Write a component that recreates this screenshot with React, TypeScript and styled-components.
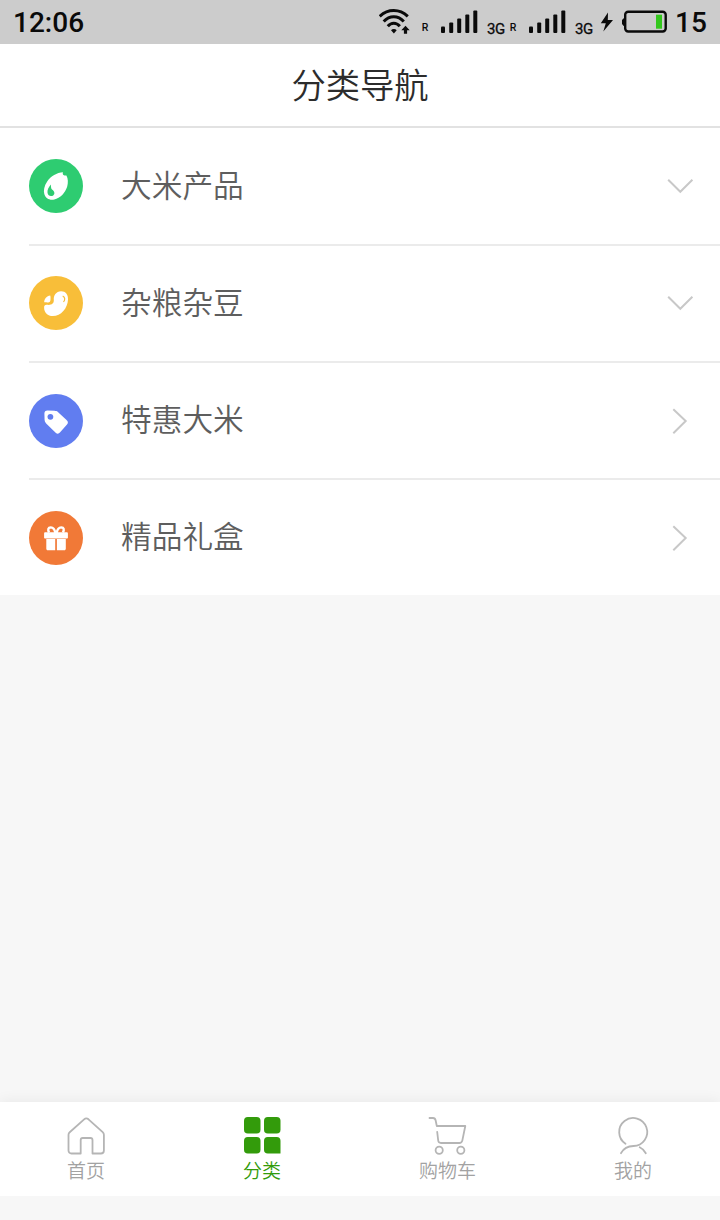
import React from "react";
import styled, { createGlobalStyle } from "styled-components";

const GlobalStyle = createGlobalStyle`
  * { box-sizing: border-box; }
  body { margin: 0; background: #f7f7f7; font-family: "Noto Sans CJK SC", sans-serif; }
`;

const Screen = styled.div`
  display: flex;
  flex-direction: column;
  width: 720px;
  height: 1220px;
  overflow: hidden;
  background: #f7f7f7;
`;

const StatusBar = styled.header`
  display: flex;
  align-items: center;
  justify-content: space-between;
  flex: none;
  height: 44px;
  padding: 1px 13px 0;
  background: #cccccc;
  color: #0a0a0a;
  font: 500 28px/43px Roboto, sans-serif;
`;

const StatusIcons = styled.div`
  display: flex;
  align-items: center;
  height: 43px;
  svg { flex: none; margin-bottom: 2px; }
`;

const Level = styled.span`
  width: 32px;
  margin-left: 8px;
`;

const Roaming = styled.span<{ $gap: number }>`
  width: 10px;
  margin: 11px 11px 0 ${(p) => p.$gap}px;
  font: 500 10.5px/16px Roboto, sans-serif;
  text-align: center;
`;

const Network = styled.span`
  width: 19px;
  margin: 12px 0 0 9px;
  font: 400 15px/16px Roboto, sans-serif;
  letter-spacing: -0.5px;
  -webkit-text-stroke: 0.3px #0a0a0a;
`;

const TitleBar = styled.h1`
  flex: none;
  height: 84px;
  margin: 0;
  border-bottom: 2px solid #e2e2e2;
  background: #fff;
  color: #2c2c2c;
  text-align: center;
  font-size: 34.3px;
  font-weight: 350;
  line-height: 79px;
`;

const CategoryList = styled.ul`
  flex: none;
  margin: 0;
  padding: 0 0 0 29px;
  background: #fff;
  list-style: none;
`;

const CategoryRow = styled.li`
  display: flex;
  align-items: center;
  height: 117px;
  padding-right: 26px;
  border-bottom: 2px solid #ebebeb;
  &:first-child { height: 118px; }
  &:nth-child(2) { padding-bottom: 1px; }
  &:last-child { height: 115px; border-bottom: 0; }
`;

const Badge = styled.span<{ $color: string }>`
  display: flex;
  width: 54px;
  height: 54px;
  border-radius: 50%;
  background: ${(p) => p.$color};
`;

const CategoryName = styled.span`
  flex: 1;
  margin-left: 38px;
  padding-bottom: 5px;
  color: #5e5e5e;
  font-size: 30.7px;
  font-weight: 350;
  line-height: 46px;
`;

const TabBar = styled.nav`
  display: flex;
  justify-content: space-between;
  flex: none;
  height: 94px;
  margin-top: auto;
  margin-bottom: 24px;
  padding: 13px 68px 0 67px;
  background: #fff;
  box-shadow: 0 0 14px rgba(0, 0, 0, 0.07);
  clip-path: inset(-14px 0 0 0);
`;

const Tab = styled.a<{ $active?: boolean }>`
  display: flex;
  flex-direction: column;
  align-items: center;
  color: ${(p) => (p.$active ? "#339b0b" : "#a2a2a2")};
  font-size: 19px;
  font-weight: 350;
  line-height: 26px;
`;

const TabIcon = styled.svg`
  display: block;
  width: 40px;
  height: 42px;
  margin: 0 -1px;
  fill: none;
  stroke: #b5b5b5;
  stroke-width: 1.8;
  stroke-linecap: round;
  stroke-linejoin: round;
`;

const Signal = () => (
  <svg width="37" height="24" viewBox="0 0 37 24" fill="#0a0a0a">
    <rect x="0" y="16.5" width="4" height="6.5" rx="1" />
    <rect x="8.2" y="12.5" width="4" height="10.5" rx="1" />
    <rect x="16.2" y="8.5" width="4" height="14.5" rx="1" />
    <rect x="24.3" y="4.5" width="4" height="18.5" rx="1" />
    <rect x="32.3" y="0.5" width="4" height="22.5" rx="1" />
  </svg>
);

const Wifi = () => (
  <svg width="32" height="28" viewBox="0 0 32 28" fill="none" stroke="#0a0a0a" strokeWidth="3">
    <path d="M.7 8.300C9 .5 20.500 .5 28.800 8.300M4.700 13.500C10.500 7.200 19 7.200 24.800 13.500M8.800 18.300c3.500-4 8.500-4 12 0" />
    <path d="M12 22.200c1.500-1.500 4.200-1.500 5.700 0l-2.800 3.300z" fill="#0a0a0a" stroke="none" />
    <path d="M26.500 17.700l4.200 4.600h-2.600v3.500h-3.200v-3.500h-2.600z" fill="#0a0a0a" stroke="none" />
  </svg>
);

const ChargingBolt = styled.svg`
  margin: 0 7px 0 6px;
`;

const Battery = () => (
  <svg width="46" height="24" viewBox="0 0 46 24">
    <path d="M4 8.300H2.700L1 10v4l1.700 2H4z" fill="#0a0a0a" />
    <rect x="4.200" y="1.800" width="40.500" height="19.700" rx="3" fill="none" stroke="#0a0a0a" strokeWidth="2.400" />
    <rect x="35" y="4.700" width="6" height="14" fill="#33c71c" />
  </svg>
);

const glyphs: Record<string, React.ReactNode> = {
  rice: (
    <>
      <path fill="#fff" d="M34 13.200c-6 .4-12.300 4-15.800 9.200-3 4.500-3.900 9-2.900 12.600 1.300 4.300 5.300 6.600 10 5.500 6-1.400 11-6.500 12.900-13 1-3.600 1-8-.8-11-1.400.1-2.300-.1-2.900-.5-.8-.6-.9-1.700-.5-2.800z" />
      <path fill="#2ecc71" d="M22 25.600c-2.400 2.500-3.900 5.700-3.500 8.200.4 2.500 2.500 3.700 4.500 3.100 2.400-.7 3.100-3.200 1.600-5-.7-.9-1.800-1.200-2.300-2.300-.4-1.200-.4-2.400-.3-4z" />
    </>
  ),
  bean: (
    <>
      <path fill="#fff" d="M32 15.300c4.500-.1 7.200 3.200 7 8.200C38.600 32.400 32 40 23.800 40c-5 0-8.700-3.500-8.700-8.300 0-2.400 1-3.200 3.200-2.900 4.100.5 6.800-1.300 6.500-4.800-.4-4.600 2.300-8.500 7.200-8.700z" />
      <path fill="#fff" d="M15.200 26.300c.1-3.500 2.500-6.200 6-6.700.5 1.300.3 2.600.3 4 0 2.300-1.200 3.300-3.200 2.900-1.200-.3-2-.3-3.100-.2z" />
      <path fill="none" stroke="#f8be39" strokeWidth="1.200" d="M33.700 20c2.500 1.200 2.600 3.700.8 6" />
    </>
  ),
  tag: (
    <>
      <path fill="#fff" stroke="#fff" strokeWidth="2.400" strokeLinejoin="round" d="M18.500 17.700l7.300.2c1 0 1.700.4 2.500 1.100l8.700 8.200c.9.800.9 1.600.1 2.500l-7.100 8.100c-.8.900-1.600.9-2.500.1l-9.500-9.200c-.8-.8-1.200-1.500-1.200-2.600l-.2-6.600c0-1.100.8-1.800 1.900-1.800z" />
      <circle cx="21.400" cy="22.800" r="2.900" fill="#617df0" />
    </>
  ),
  gift: (
    <>
      <path fill="none" stroke="#fff" strokeWidth="2.400" d="M26.300 22c-.5-3.300-2.300-5.500-4.600-5.600-2.500 0-3.200 2.400-1.600 5M27.700 22c.5-3.300 2.300-5.500 4.600-5.600 2.500 0 3.200 2.400 1.600 5" />
      <path fill="#fff" d="M16.300 21.200h21.400c.7 0 1.200.5 1.200 1.200v4c0 .7-.5 1.200-1.200 1.200H16.300c-.7 0-1.200-.5-1.200-1.200v-4c0-.7.5-1.200 1.200-1.200zM17.300 28.100h8.900v11.200h-7.400c-.9 0-1.500-.6-1.500-1.500zM27.900 28.100h8.900v9.700c0 .9-.6 1.500-1.500 1.500h-7.400z" />
    </>
  ),
};

const Chevron = ({ down }: { down?: boolean }) => (
  <svg width="28" height="28" viewBox="0 0 28 28" fill="none" stroke="#c8c8c8" strokeWidth="2">
    <path d={down ? "M2.200 7.800L14.300 19.800 26.400 7.800" : "M7.300 2.200L19.700 14 7.300 26.200"} />
  </svg>
);

const categories = [
  { name: "大米产品", color: "#2ecc71", glyph: "rice", expandable: true },
  { name: "杂粮杂豆", color: "#f8be39", glyph: "bean", expandable: true },
  { name: "特惠大米", color: "#617df0", glyph: "tag", expandable: false },
  { name: "精品礼盒", color: "#f17937", glyph: "gift", expandable: false },
];

export default function App() {
  return (
    <>
      <GlobalStyle />
      <Screen>
        <StatusBar>
          <span>12:06</span>
          <StatusIcons>
            <Wifi />
            <Roaming $gap={9}>R</Roaming>
            <Signal />
            <Network>3G</Network>
            <Roaming $gap={2}>R</Roaming>
            <Signal />
            <Network>3G</Network>
            <ChargingBolt width="14" height="22" viewBox="0 0 14 22" fill="#0a0a0a">
              <path d="M8 1.500L.8 12.200h5L3.300 20.500 13 9H7.800z" />
            </ChargingBolt>
            <Battery />
            <Level>15</Level>
          </StatusIcons>
        </StatusBar>
        <TitleBar>分类导航</TitleBar>
        <CategoryList>
          {categories.map((c) => (
            <CategoryRow key={c.name}>
              <Badge $color={c.color}>
                <svg width="54" height="54" viewBox="0 0 54 54">{glyphs[c.glyph]}</svg>
              </Badge>
              <CategoryName>{c.name}</CategoryName>
              <Chevron down={c.expandable} />
            </CategoryRow>
          ))}
        </CategoryList>
        <TabBar>
          <Tab>
            <TabIcon viewBox="0 0 40 42">
              <path d="M14.700 38.500H5.500c-1.800 0-3-1.200-3-3V19.800c0-1.100.4-1.900 1.200-2.600L18.100 4.300c1.500-1.300 2.900-1.300 4.400 0l14.200 12.900c.8.7 1.200 1.500 1.200 2.600v15.700c0 1.800-1.200 3-3 3h-8.400V25c0-1.300-.7-2-2-2H16.700c-1.300 0-2 .7-2 2z" />
            </TabIcon>
            首页
          </Tab>
          <Tab $active>
            <TabIcon viewBox="0 0 40 42">
              <g fill="#339b0b" stroke="none">
                <rect x="2" y="2" width="16.500" height="16.500" rx="3.800" />
                <rect x="22" y="2" width="16.500" height="16.500" rx="3.800" />
                <rect x="2" y="22" width="16.500" height="16.500" rx="3.800" />
                <path d="M25.800 22h8.900a3.800 3.800 0 0 1 3.800 3.800v12.700H25.800a3.800 3.800 0 0 1-3.800-3.800v-8.900a3.800 3.800 0 0 1 3.800-3.800z" />
              </g>
            </TabIcon>
            分类
          </Tab>
          <Tab>
            <TabIcon viewBox="0 0 40 42">
              <path d="M2.500 3H6c1.500 0 2.300.8 2.600 2.300L9.800 11h28.500l-3 14.600c-.4 1.700-1.300 2.400-3 2.400H14c-1.700 0-2.600-.8-2.800-2.500L10.200 17" />
              <circle cx="12.200" cy="35.300" r="3.600" />
              <circle cx="33.800" cy="35.300" r="3.600" />
            </TabIcon>
            购物车
          </Tab>
          <Tab>
            <TabIcon viewBox="0 0 40 42">
              <path d="M12.500 28.700A14 14 0 1 1 20.500 31C14.500 31 10.500 33.500 8 38.200M26.700 32.300c2.600 1.200 4.600 3.200 6.100 5.900" />
            </TabIcon>
            我的
          </Tab>
        </TabBar>
      </Screen>
    </>
  );
}
